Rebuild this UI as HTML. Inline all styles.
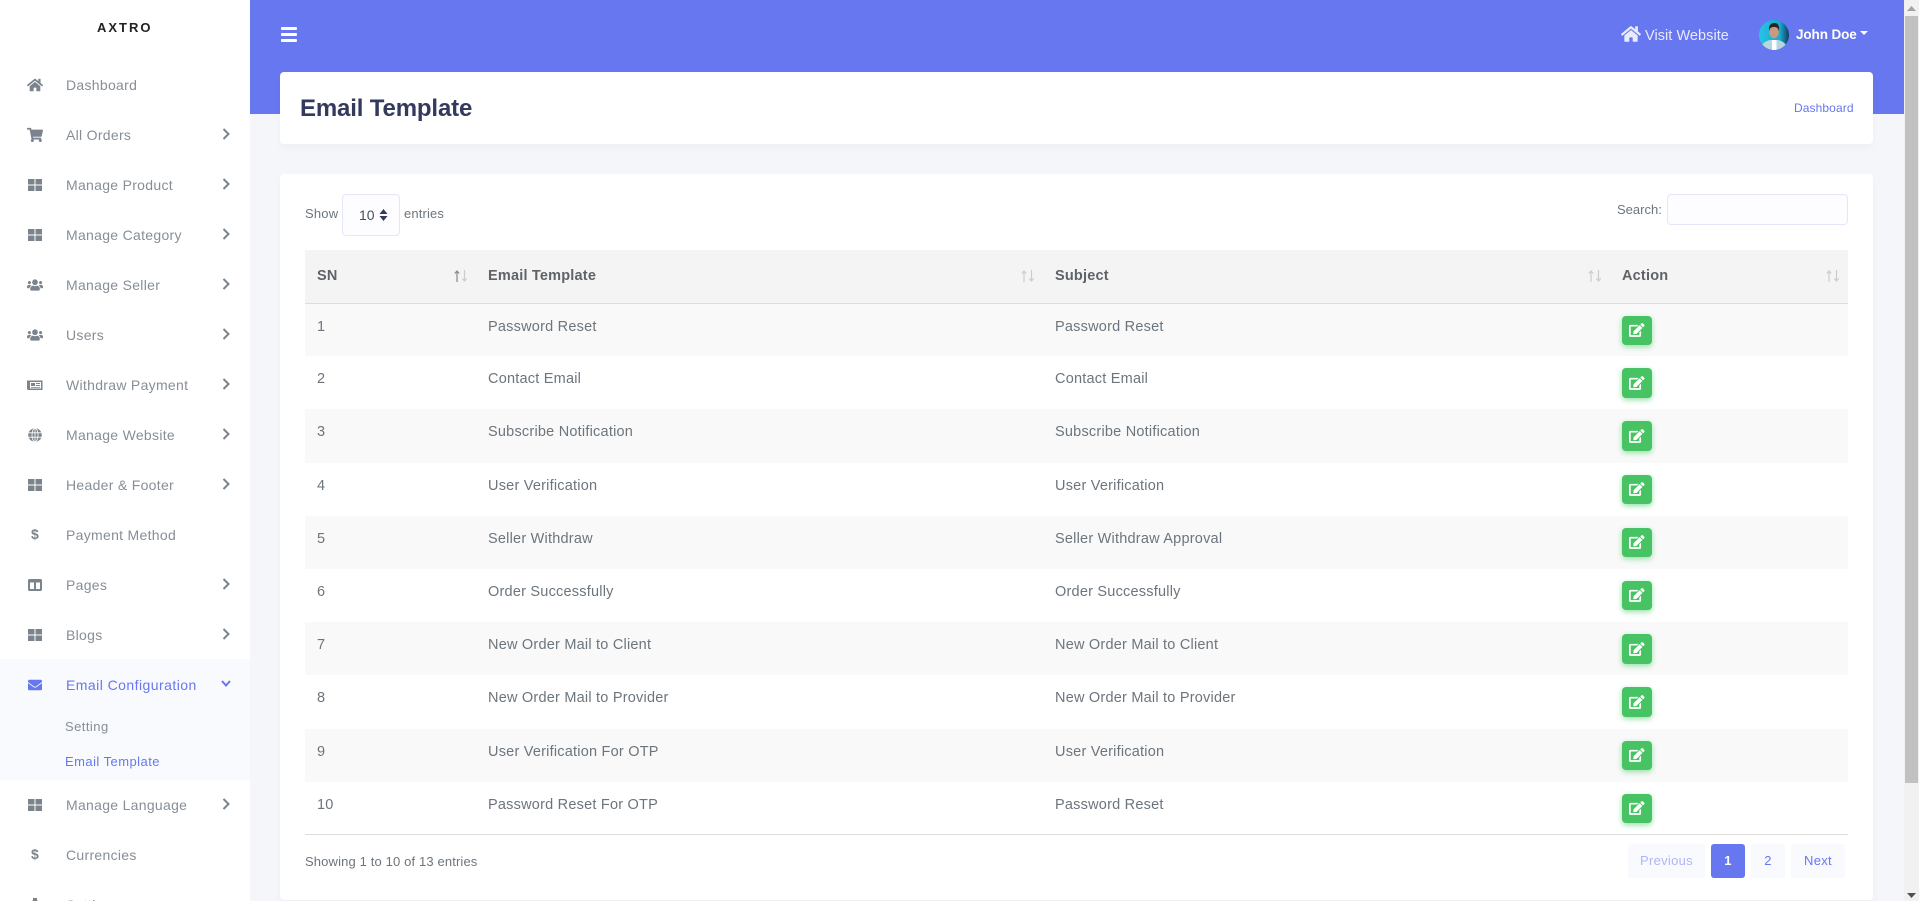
<!DOCTYPE html>
<html lang="en"><head><meta charset="utf-8"><title>Email Template</title>
<style>
*{box-sizing:border-box}
html,body{margin:0;padding:0;width:1919px;height:901px;overflow:hidden;background:#f4f6f9;font-family:"Liberation Sans",sans-serif;font-size:14px;color:#6c757d}
a{text-decoration:none;color:inherit}
.abs{position:absolute}
#side{position:absolute;left:0;top:0;width:250px;height:901px;background:#fff;overflow:hidden}
#brand{position:absolute;left:97px;top:20px;font-size:13px;font-weight:bold;letter-spacing:2px;color:#222;line-height:16px}
#side ul{list-style:none;margin:0;padding:0;position:absolute;top:60px;left:0;width:250px}
#side li{position:relative}
#side li>a{display:block;height:50px;line-height:50px;padding-left:66px;color:#868e96;letter-spacing:.3px;position:relative}
#side li svg.i{position:absolute;left:27px;top:17px;width:16px;height:16px;fill:#7b848c}
#side li svg.c{position:absolute;left:222px;top:16px;width:8px;height:16px;fill:none;stroke:#7b848c;stroke-width:2}
#side li span.d{position:absolute;left:31px;top:-1px;font-weight:bold;font-size:14px;color:#7b848c}
#side li.on>a{color:#6777ef;letter-spacing:.45px}
#side li.on svg.i{fill:#6777ef;left:28px;width:14px;height:14px;top:18px}
#side li.on{background:#f8fafd;height:121px;margin-top:-1px;padding-top:1px}
.sub{position:absolute;left:65px;font-size:13px;letter-spacing:.45px;color:#868e96;line-height:16px}
#top{position:absolute;left:250px;top:0;width:1654px;height:114px;background:#6777ef}
#bar{position:absolute;left:1904px;top:0;width:15px;height:901px;background:#f1f1f1}
#bar i{position:absolute;left:1px;top:16px;width:13px;height:767px;background:#c1c1c1}
.cd{position:absolute;left:280px;width:1593px;background:#fff;border-radius:4px;box-shadow:0 4px 8px rgba(0,0,0,.03)}
h1{position:absolute;left:300px;top:93px;margin:0;font-size:24px;line-height:32px;font-weight:bold;color:#34395e;letter-spacing:-.15px}
table{position:absolute;left:305px;top:250px;width:1543px;border-collapse:collapse;table-layout:fixed}
th{height:53px;background:#f4f4f4;border-bottom:1px solid #ddd;text-align:left;padding:0 12px;font-size:14.5px;font-weight:bold;color:#5f6368;letter-spacing:.2px;position:relative}
td{height:53.2px;padding:14px 12px 0;vertical-align:top;line-height:18px;font-size:14.5px;letter-spacing:.22px;color:#6c757d}
tr.o td{background:#f9f9f9}
.ed{display:block;width:30px;height:29.5px;margin-top:-2px;background:#47c363;border-radius:4px;box-shadow:0 2px 6px #95e0a8;position:relative}
.ed svg{position:absolute;left:7px;top:7.5px;width:15.5px;height:14px;fill:#fff}
th svg{position:absolute;right:8px;top:19px;width:14px;height:14px;fill:none;stroke-width:1.2}
.pg{position:absolute;top:844px;height:34px;line-height:34px;text-align:center;background:#f9fafe;border-radius:3px;font-size:13px;color:#6777ef;font-weight:normal;letter-spacing:.3px}
</style></head><body>

<svg width="0" height="0" style="position:absolute">
<symbol id="ed" viewBox="0 0 576 512"><path d="M402.600 83.200l90.200 90.200c3.800 3.800 3.800 10 0 13.800L274.400 405.600l-92.800 10.300c-12.400 1.400-22.900-9.100-21.500-21.500l10.300-92.800L388.800 83.200c3.800-3.800 10-3.800 13.800 0zm162-22.900l-48.800-48.800c-15.200-15.200-39.900-15.200-55.200 0l-35.400 35.400c-3.800 3.800-3.800 10 0 13.800l90.200 90.200c3.800 3.800 10 3.800 13.800 0l35.400-35.400c15.200-15.300 15.200-40 0-55.200zM384 346.200V448H64V128h229.800c3.200 0 6.200-1.300 8.500-3.500l40-40c7.600-7.600 2.200-20.500-8.500-20.500H48C21.500 64 0 85.500 0 112v352c0 26.500 21.500 48 48 48h352c26.500 0 48-21.500 48-48V306.200c0-10.700-12.900-16-20.500-8.500l-40 40c-2.200 2.300-3.500 5.300-3.500 8.500z"/></symbol>
<symbol id="th" viewBox="0 0 16 16"><path d="M1 2h6.500v5.500H1zM8.500 2H15v5.500H8.500zM1 8.500h6.500V14H1zM8.500 8.500H15V14H8.500z"/></symbol>
<symbol id="us" viewBox="0 0 640 512"><path d="M96 224c35.300 0 64-28.700 64-64s-28.700-64-64-64-64 28.700-64 64 28.700 64 64 64zm448 0c35.300 0 64-28.700 64-64s-28.700-64-64-64-64 28.700-64 64 28.700 64 64 64zm32 32h-64c-17.600 0-33.500 7.100-45.100 18.600 40.300 22.100 68.900 62 75.100 109.400h66c17.700 0 32-14.300 32-32v-32c0-35.300-28.700-64-64-64zm-256 0c61.900 0 112-50.100 112-112S381.900 32 320 32 208 82.100 208 144s50.100 112 112 112zm76.800 32h-8.300c-20.800 10-43.900 16-68.500 16s-47.600-6-68.500-16h-8.300C179.600 288 128 339.600 128 403.200V432c0 26.500 21.500 48 48 48h288c26.500 0 48-21.500 48-48v-28.800c0-63.600-51.600-115.200-115.200-115.200zm-223.700-13.400C161.500 263.100 145.600 256 128 256H64c-35.300 0-64 28.700-64 64v32c0 17.700 14.300 32 32 32h65.900c6.300-47.400 34.900-87.300 75.200-109.400z"/></symbol>
<symbol id="ch" viewBox="0 0 8 16"><path d="M1.500 3l5 5-5 5"/></symbol>
<symbol id="so" viewBox="0 0 14 14"><path d="M3 13V2M.8 4.500L3 2l2.200 2.500" stroke="#ccc"/><path d="M10.500 1v11M8.300 9.500l2.200 2.500 2.200-2.500" stroke="#ccc"/></symbol>
</svg>

<div id="top"></div>
<div id="bar"><i></i>
<svg class="abs" style="left:0;top:4px" width="15" height="8"><path d="M3 7L7.500 2L12 7Z" fill="#a3a3a3"/></svg>
<svg class="abs" style="left:0;top:892px" width="15" height="8"><path d="M3 1L7.500 6L12 1Z" fill="#505050"/></svg>
</div>

<aside id="side">
<div id="brand">AXTRO</div>
<ul>
<li><a href="#"><svg class="i" viewBox="0 0 576 512"><path d="M280.370 148.260L96 300.110V464a16 16 0 0 0 16 16l112.060-.29a16 16 0 0 0 15.920-16V368a16 16 0 0 1 16-16h64a16 16 0 0 1 16 16v95.640a16 16 0 0 0 16 16.050L464 480a16 16 0 0 0 16-16V300L295.670 148.260a12.190 12.190 0 0 0-15.300 0zM571.600 251.470L488 182.560V44.050a12 12 0 0 0-12-12h-56a12 12 0 0 0-12 12v72.610L318.470 43a48 48 0 0 0-61 0L4.340 251.470a12 12 0 0 0-1.600 16.900l25.500 31A12 12 0 0 0 45.150 301l235.220-193.740a12.190 12.190 0 0 1 15.300 0L530.900 301a12 12 0 0 0 16.900-1.600l25.500-31a12 12 0 0 0-1.700-16.930z"/></svg>Dashboard</a></li>
<li><a href="#"><svg class="i" viewBox="0 0 576 512"><path d="M528.120 301.319l47.273-208C578.806 78.301 567.391 64 551.990 64H159.208l-9.166-44.810C147.758 8.021 137.930 0 126.529 0H24C10.745 0 0 10.745 0 24v16c0 13.255 10.745 24 24 24h69.883l70.248 343.435C147.325 417.100 136 435.222 136 456c0 30.928 25.072 56 56 56s56-25.072 56-56c0-15.674-6.447-29.835-16.824-40h209.647C430.447 426.165 424 440.326 424 456c0 30.928 25.072 56 56 56s56-25.072 56-56c0-22.172-12.888-41.332-31.579-50.405l5.517-24.276c3.413-15.018-8.002-29.319-23.403-29.319H218.117l-6.545-32h293.145c11.206 0 20.920-7.754 23.403-18.681z"/></svg>All Orders<svg class="c"><use href="#ch"/></svg></a></li>
<li><a href="#"><svg class="i"><use href="#th"/></svg>Manage Product<svg class="c"><use href="#ch"/></svg></a></li>
<li><a href="#"><svg class="i"><use href="#th"/></svg>Manage Category<svg class="c"><use href="#ch"/></svg></a></li>
<li><a href="#"><svg class="i"><use href="#us"/></svg>Manage Seller<svg class="c"><use href="#ch"/></svg></a></li>
<li><a href="#"><svg class="i"><use href="#us"/></svg>Users<svg class="c"><use href="#ch"/></svg></a></li>
<li><a href="#"><svg class="i" viewBox="0 0 16 16"><path fill-rule="evenodd" d="M0 3.500h15.500v9.500H1.500A1.500 1.500 0 0 1 0 11.500zM3 5v6.500h11V5zM4 6h4v3H4zM9 6h4v1H9zM9 8h4v1H9zM4 10h9v.8H4z"/></svg>Withdraw Payment<svg class="c"><use href="#ch"/></svg></a></li>
<li><a href="#"><svg class="i" viewBox="0 0 16 16"><circle cx="8" cy="8" r="6.800"/><path d="M8 1v14M1 5.800h14M1 10.200h14" stroke="#fff" stroke-width=".8"/><ellipse cx="8" cy="8" rx="3" ry="6.800" fill="none" stroke="#fff" stroke-width=".8"/></svg>Manage Website<svg class="c"><use href="#ch"/></svg></a></li>
<li><a href="#"><svg class="i"><use href="#th"/></svg>Header &amp; Footer<svg class="c"><use href="#ch"/></svg></a></li>
<li><a href="#"><span class="d">$</span>Payment Method</a></li>
<li><a href="#"><svg class="i" viewBox="0 0 16 16"><path fill-rule="evenodd" d="M2.500 2h11A1.500 1.500 0 0 1 15 3.500v9a1.500 1.500 0 0 1-1.500 1.500h-11A1.500 1.500 0 0 1 1 12.500v-9A1.500 1.500 0 0 1 2.500 2zM3 5.500V12h4V5.500zM9 5.500V12h4V5.500z"/></svg>Pages<svg class="c"><use href="#ch"/></svg></a></li>
<li><a href="#"><svg class="i"><use href="#th"/></svg>Blogs<svg class="c"><use href="#ch"/></svg></a></li>
<li class="on"><a href="#"><svg class="i" viewBox="0 0 512 512"><path d="M502.300 190.800c3.900-3.100 9.700-.2 9.700 4.700V400c0 26.500-21.500 48-48 48H48c-26.500 0-48-21.500-48-48V195.600c0-5 5.700-7.800 9.700-4.700 22.400 17.400 52.100 39.500 154.100 113.600 21.100 15.400 56.700 47.800 92.200 47.600 35.700.3 72-32.800 92.300-47.600 102-74.100 131.600-96.300 154-113.700zM256 320c23.200.4 56.600-29.200 73.400-41.400 132.700-96.300 142.800-104.700 173.400-128.700 5.800-4.500 9.200-11.500 9.200-18.900v-19c0-26.500-21.500-48-48-48H48C21.500 64 0 85.500 0 112v19c0 7.400 3.400 14.300 9.200 18.900 30.600 23.900 40.700 32.400 173.400 128.700 16.800 12.200 50.200 41.800 73.400 41.400z"/></svg>Email Configuration<svg class="c" viewBox="0 0 10 16" style="left:221px;width:10px;stroke:#6777ef"><path d="M1 5l4 4.500 4-4.500"/></svg></a></li>
<li><a href="#"><svg class="i"><use href="#th"/></svg>Manage Language<svg class="c"><use href="#ch"/></svg></a></li>
<li><a href="#"><span class="d">$</span>Currencies</a></li>
<li><a href="#"><svg class="i" viewBox="0 0 16 16"><rect x="6" y="1" width="4" height="4"/><circle cx="8" cy="9" r="6"/></svg>Setting</a></li>
</ul>
<a href="#" class="sub" style="top:719px">Setting</a>
<a href="#" class="sub" style="top:754px;color:#6777ef">Email Template</a>
</aside>

<svg class="abs" style="left:281px;top:27px" width="16" height="15" viewBox="0 0 16 15"><rect x="0" y="0" width="16" height="3" rx="1" fill="#fff"/><rect x="0" y="6" width="16" height="3" rx="1" fill="#fff"/><rect x="0" y="12" width="16" height="3" rx="1" fill="#fff"/></svg>
<svg class="abs" style="left:1621px;top:25px" width="20" height="18" viewBox="0 0 576 512" fill="#e9ebfd"><path d="M280.370 148.260L96 300.110V464a16 16 0 0 0 16 16l112.060-.29a16 16 0 0 0 15.920-16V368a16 16 0 0 1 16-16h64a16 16 0 0 1 16 16v95.640a16 16 0 0 0 16 16.050L464 480a16 16 0 0 0 16-16V300L295.670 148.260a12.190 12.190 0 0 0-15.300 0zM571.600 251.470L488 182.560V44.050a12 12 0 0 0-12-12h-56a12 12 0 0 0-12 12v72.610L318.470 43a48 48 0 0 0-61 0L4.340 251.470a12 12 0 0 0-1.600 16.900l25.500 31A12 12 0 0 0 45.150 301l235.220-193.740a12.190 12.190 0 0 1 15.300 0L530.900 301a12 12 0 0 0 16.900-1.600l25.500-31a12 12 0 0 0-1.700-16.930z"/></svg>
<a href="#" class="abs" style="left:1645px;top:27.500px;line-height:17px;color:#e9ebfd;font-size:14.500px;letter-spacing:.05px">Visit Website</a>
<svg class="abs" style="left:1759px;top:20px" width="30" height="30" viewBox="0 0 30 30"><defs><clipPath id="av"><circle cx="15" cy="15" r="15"/></clipPath><linearGradient id="ag" x1="0" x2="1"><stop offset="0" stop-color="#27c3e6"/><stop offset=".7" stop-color="#18a9d0"/><stop offset="1" stop-color="#123a55"/></linearGradient></defs><g clip-path="url(#av)"><rect width="30" height="30" fill="url(#ag)"/><path d="M2 30c0-7 5-9 9-10h8c4 1 9 3 9 10z" fill="#b5d6dc"/><rect x="13" y="20" width="4.500" height="10" fill="#fff"/><ellipse cx="15" cy="12" rx="4.800" ry="6.200" fill="#c99a80"/><path d="M10 11c-.5-6 2-8 5.500-8s5 2.500 4.500 8c-1-3-2-4-5-4s-4 1-5 4z" fill="#2b2320"/></g></svg>
<a href="#" class="abs" style="left:1796px;top:26px;line-height:17px;color:#fff;font-weight:bold;font-size:13.500px;letter-spacing:-.1px">John Doe</a>
<svg class="abs" style="left:1860px;top:31px" width="8" height="5"><path d="M0 0h8L4 4z" fill="#fff"/></svg>

<div class="cd" style="top:72px;height:72px"></div>
<h1>Email Template</h1>
<a href="#" class="abs" style="left:1794px;top:100px;font-size:12px;line-height:16px;color:#6777ef;letter-spacing:.1px">Dashboard</a>

<div class="cd" style="top:174px;height:726px"></div>
<span class="abs" style="left:305px;top:206px;font-size:13px;line-height:16px;letter-spacing:.2px">Show</span>
<div class="abs" style="left:342px;top:194px;width:58px;height:42px;background:#fdfdff;border:1px solid #e4e6fc;border-radius:4px;color:#495057;line-height:41px;padding-left:16px;font-size:14px">10
<svg class="abs" style="left:36px;top:14px" width="9" height="12" viewBox="0 0 9 12" fill="#34395e"><path d="M.5 5L4.500 0l4 5zM.5 7h8l-4 5z"/></svg></div>
<span class="abs" style="left:404px;top:206px;font-size:13px;line-height:16px;letter-spacing:.15px">entries</span>
<span class="abs" style="left:1617px;top:201.500px;font-size:13px;line-height:16px">Search:</span>
<div class="abs" style="left:1667px;top:194px;width:181px;height:31px;background:#fdfdff;border:1px solid #e4e6fc;border-radius:4px"></div>

<table>
<colgroup><col style="width:171px"><col style="width:567px"><col style="width:567px"><col style="width:238px"></colgroup>
<thead><tr>
<th>SN<svg viewBox="0 0 14 14"><path d="M3 13V2M.8 4.500L3 2l2.200 2.500" stroke="#888"/><path d="M10.500 1v11M8.300 9.500l2.200 2.500 2.200-2.500" stroke="#ccc"/></svg></th>
<th>Email Template<svg><use href="#so"/></svg></th>
<th>Subject<svg><use href="#so"/></svg></th>
<th>Action<svg><use href="#so"/></svg></th>
</tr></thead>
<tbody>
<tr class="o"><td>1</td><td>Password Reset</td><td>Password Reset</td><td><a class="ed" href="#"><svg><use href="#ed"/></svg></a></td></tr>
<tr><td>2</td><td>Contact Email</td><td>Contact Email</td><td><a class="ed" href="#"><svg><use href="#ed"/></svg></a></td></tr>
<tr class="o"><td>3</td><td>Subscribe Notification</td><td>Subscribe Notification</td><td><a class="ed" href="#"><svg><use href="#ed"/></svg></a></td></tr>
<tr><td>4</td><td>User Verification</td><td>User Verification</td><td><a class="ed" href="#"><svg><use href="#ed"/></svg></a></td></tr>
<tr class="o"><td>5</td><td>Seller Withdraw</td><td>Seller Withdraw Approval</td><td><a class="ed" href="#"><svg><use href="#ed"/></svg></a></td></tr>
<tr><td>6</td><td>Order Successfully</td><td>Order Successfully</td><td><a class="ed" href="#"><svg><use href="#ed"/></svg></a></td></tr>
<tr class="o"><td>7</td><td>New Order Mail to Client</td><td>New Order Mail to Client</td><td><a class="ed" href="#"><svg><use href="#ed"/></svg></a></td></tr>
<tr><td>8</td><td>New Order Mail to Provider</td><td>New Order Mail to Provider</td><td><a class="ed" href="#"><svg><use href="#ed"/></svg></a></td></tr>
<tr class="o"><td>9</td><td>User Verification For OTP</td><td>User Verification</td><td><a class="ed" href="#"><svg><use href="#ed"/></svg></a></td></tr>
<tr style="border-bottom:1px solid #ddd"><td>10</td><td>Password Reset For OTP</td><td>Password Reset</td><td><a class="ed" href="#"><svg><use href="#ed"/></svg></a></td></tr>
</tbody></table>

<span class="abs" style="left:305px;top:854px;font-size:13px;line-height:16px;letter-spacing:.14px">Showing 1 to 10 of 13 entries</span>
<a href="#" class="pg" style="left:1628px;width:77px;color:#aeb6f6">Previous</a>
<a href="#" class="pg" style="left:1711px;width:34px;background:#6777ef;color:#fff;font-weight:bold">1</a>
<a href="#" class="pg" style="left:1751px;width:34px">2</a>
<a href="#" class="pg" style="left:1791px;width:54px">Next</a>
</body></html>
